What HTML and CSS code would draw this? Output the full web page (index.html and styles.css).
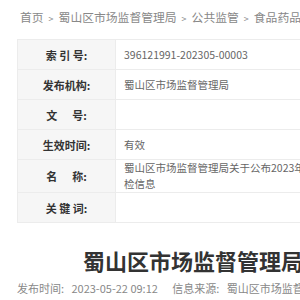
FILE: index.html
```html
<!DOCTYPE html>
<html lang="zh-CN">
<head>
    <meta charset="UTF-8">
    <meta name="viewport" content="width=device-width, initial-scale=1.0">
    <title>蜀山区市场监督管理局关于公布2023年第一批食品安全监督抽检信息</title>
    <link rel="stylesheet" href="styles.css">
</head>
<body>
    <div class="page">
        <div class="crumbs">
            <a href="#">首页</a><span class="sep">&gt;</span><a href="#">蜀山区市场监督管理局</a><span class="sep">&gt;</span><a href="#">公共监管</a><span class="sep">&gt;</span><a href="#">食品药品安全</a>
        </div>

        <table class="info-table">
            <tr>
                <th>索&nbsp;引&nbsp;号:</th>
                <td>396121991-202305-00003</td>
            </tr>
            <tr>
                <th>发布机构:</th>
                <td>蜀山区市场监督管理局</td>
            </tr>
            <tr>
                <th>文&nbsp;&nbsp;&nbsp;&nbsp;&nbsp;&nbsp;号:</th>
                <td></td>
            </tr>
            <tr>
                <th>生效时间:</th>
                <td>有效</td>
            </tr>
            <tr>
                <th>名&nbsp;&nbsp;&nbsp;&nbsp;&nbsp;&nbsp;称:</th>
                <td>蜀山区市场监督管理局关于公布2023年第一批食品安全监督抽检信息</td>
            </tr>
            <tr>
                <th>关&nbsp;键&nbsp;词:</th>
                <td></td>
            </tr>
        </table>

        <h1 class="title">蜀山区市场监督管理局关于公布2023年第一批食品安全监督抽检信息</h1>

        <div class="meta">
            <span class="meta-item">发布时间:&nbsp;&nbsp;&nbsp;2023-05-22 09:12</span>
            <span class="meta-item">信息来源:&nbsp;&nbsp;&nbsp;蜀山区市场监督管理局</span>
        </div>
    </div>
</body>
</html>
```

FILE: styles.css
```css
body {
    margin: 0;
    overflow: hidden;
    background-color: #fff;
    font-family: "Microsoft YaHei", "Noto Sans CJK SC", sans-serif;
    color: #333;
}

.page {
    width: 700px;
    padding-left: 17px;
}

.crumbs {
    padding: 8px 0 0 3px;
    line-height: 18px;
    font-size: 11.8px;
    color: #888;
    white-space: nowrap;
}

.crumbs a {
    color: #888;
    text-decoration: none;
}

.crumbs .sep {
    margin: 0 5px;
    font-size: 9px;
}

.info-table {
    margin-top: 11px;
    width: 405px;
    border-collapse: collapse;
    border: 1px solid #ececec;
    font-size: 10.5px;
}

.info-table th,
.info-table td {
    height: 29px;
    border: 1px solid #ececec;
    line-height: 16px;
    vertical-align: middle;
}

.info-table th {
    width: 97px;
    padding: 0;
    background-color: #f6f6f6;
    font-weight: bold;
    font-size: 11px;
    color: #333;
    text-align: center;
}

.info-table td {
    padding: 0 8px;
    color: #666;
}

.title {
    margin: 24px 0 0 66px;
    font-size: 22px;
    line-height: 26px;
    font-weight: bold;
    color: #333;
    white-space: nowrap;
}

.meta {
    margin-top: 7px;
    font-size: 11px;
    color: #888;
    white-space: nowrap;
}

.meta-item {
    margin-right: 12px;
}
```
